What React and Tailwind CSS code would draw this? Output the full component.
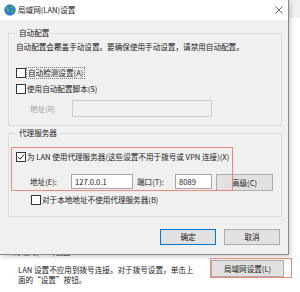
import React from "react";

function Box({ checked }) {
  return (
    <span className="w-[10px] h-[10px] border border-[#333333] bg-white flex items-center justify-center shrink-0">
      {checked && (
        <svg width="8" height="8" viewBox="0 0 8 8">
          <path d="M1 4.2 L3 6.2 L7 1.4" stroke="#222" strokeWidth="1" fill="none" />
        </svg>
      )}
    </span>
  );
}

export default function App() {
  return (
    <div className="relative w-[300px] h-[292px] overflow-hidden bg-white font-['Noto_Sans_CJK_SC',sans-serif] text-[7.6px] leading-[10px] text-[#1a1a1a]">
      {/* underlying window */}
      <div className="flex flex-col">
        <div className="h-[18px] bg-[#f0f0f0]" />
        <div className="pt-[229px] pl-[13px] leading-[10px] text-[#333]">局域网(LAN)设置</div>
        <div className="mt-[3px] flex items-start">
          <div className="ml-[18px] w-[190px] mt-[5px] whitespace-nowrap">
            LAN 设置不应用到拨号连接。对于拨号设置，单击上
            <br />
            面的“设置”按钮。
          </div>
          <div className="ml-[3px] w-[73px] h-[17px] bg-[#e1e1e1] border border-[#adadad] flex items-center justify-center">
            局域网设置(L)
          </div>
        </div>
      </div>

      {/* dialog */}
      <div className="absolute left-0 top-0 w-[289px] h-[255px] bg-[#f0f0f0] flex flex-col border-r border-b border-[#8a8a8a] shadow-[1px_1px_5px_rgba(0,0,0,0.25)]">
        <div className="h-[20px] bg-white flex items-center pl-[4px] pr-[5px]">
          <svg width="12" height="12" viewBox="0 0 12 12" className="shrink-0">
            <circle cx="6" cy="6" r="5.3" fill="#2d7fd6" />
            <path d="M2.2 3.6 C3.4 2.6 4.6 3.2 4.4 4.4 C4.2 5.4 5.4 5.6 5.2 6.8 C5 7.8 3.8 8 3.2 7.2 C2.6 6.4 1.6 5.4 2.2 3.6 Z" fill="#49b24a" />
            <path d="M6.6 1.6 C7.8 1.6 9.4 2.6 9.8 3.8 C9 4.2 8.2 3.6 7.6 4.2 C7 4.6 6.2 3.6 6.6 2.6 Z" fill="#49b24a" />
            <path d="M7.4 6.6 C8.4 6 9.8 6.6 9.6 7.8 C9.2 9 8.2 9.6 7.6 9 C7 8.2 7 7.2 7.4 6.6 Z" fill="#49b24a" />
            <circle cx="6" cy="6" r="5.3" fill="none" stroke="#1b5fae" strokeWidth="0.6" />
          </svg>
          <span className="ml-[2px]">局域网(LAN)设置</span>
          <svg width="8" height="8" viewBox="0 0 8 8" className="ml-auto">
            <path d="M0.5 0.5 L7.5 7.5 M7.5 0.5 L0.5 7.5" stroke="#444" strokeWidth="0.8" />
          </svg>
        </div>

        <div className="flex flex-col pl-[8px] pr-[6px] pt-[8px]">
          <fieldset className="border border-[#dcdcdc] pl-[7px] pb-[8px]">
            <legend className="ml-[1px] px-[2px] leading-[10px]">自动配置</legend>
            <div className="mt-[4px] whitespace-nowrap">自动配置会覆盖手动设置。要确保使用手动设置，请禁用自动配置。</div>
            <div className="mt-[15px] flex items-center gap-[0px]">
              <Box />
              <span className="border border-dotted border-[#7a7a7a] px-[1px] leading-[10px]">自动检测设置(A)</span>
            </div>
            <div className="mt-[5px] flex items-center gap-[1px]">
              <Box />
              <span>使用自动配置脚本(S)</span>
            </div>
            <div className="mt-[6px] flex items-center">
              <span className="ml-[14px] w-[42px] text-[#a0a0a0]">地址(R)</span>
              <div className="w-[140px] h-[17px] border border-[#cccccc]" />
            </div>
          </fieldset>

          <fieldset className="mt-[2px] border border-[#dcdcdc] pl-[7px] pb-[11px]">
            <legend className="ml-[1px] px-[2px] leading-[10px]">代理服务器</legend>
            <div className="mt-[14px] flex items-center gap-[1px] whitespace-nowrap">
              <Box checked />
              <span>为 LAN 使用代理服务器(这些设置不用于拨号或 VPN 连接)(X)</span>
            </div>
            <div className="mt-[12px] flex items-start">
              <span className="ml-[14px] w-[41px] leading-[15px]">地址(E):</span>
              <div className="w-[62px] h-[15px] bg-white border border-[#a8a8a8] pl-[3px] leading-[13px]">127.0.0.1</div>
              <span className="ml-[4px] w-[38px] leading-[15px]">端口(T):</span>
              <div className="w-[37px] h-[15px] bg-white border border-[#a8a8a8] pl-[3px] leading-[13px]">8089</div>
              <div className="ml-[4px] w-[57px] h-[17px] bg-[#e1e1e1] border border-[#adadad] flex items-center justify-center">高级(C)</div>
            </div>
            <div className="mt-[4px] ml-[15px] flex items-center gap-[1px] whitespace-nowrap">
              <Box />
              <span>对于本地地址不使用代理服务器(B)</span>
            </div>
          </fieldset>

          <div className="mt-[12px] flex justify-end gap-[8px] pr-[2px]">
            <div className="w-[56px] h-[16px] bg-[#e1e1e1] border border-[#0078d7] flex items-center justify-center">确定</div>
            <div className="w-[56px] h-[16px] bg-[#e1e1e1] border border-[#adadad] flex items-center justify-center">取消</div>
          </div>
        </div>
      </div>

      {/* annotation boxes */}
      <div className="absolute left-[11px] top-[147px] w-[222px] h-[44px] border border-[#f08878]" />
      <div className="absolute left-[210px] top-[258px] w-[82px] h-[20px] border border-[#f08878]" />
    </div>
  );
}
